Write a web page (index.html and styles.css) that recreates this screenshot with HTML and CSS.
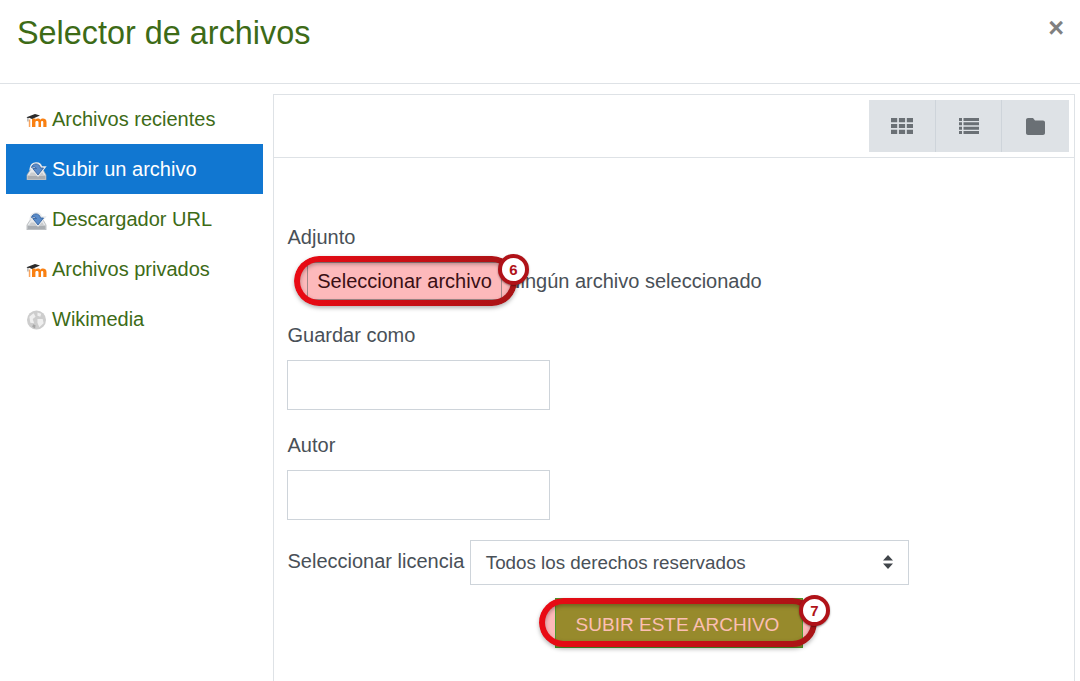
FILE: index.html
```html
<!DOCTYPE html>
<html lang="es">
<head>
<meta charset="utf-8">
<title>Selector de archivos</title>
<link rel="stylesheet" href="styles.css">
</head>
<body>
<svg class="defs" width="0" height="0" aria-hidden="true">
  <defs>
    <symbol id="moodle" viewBox="0 0 21 20">
      <path d="M2.800 9.500H4.300V17H2.800Z" fill="#f9a45c"/>
      <path d="M6 17V8.500H9.400V9.600C10.500 8 13.500 8 14.300 9.700 15.500 8 20.500 7.700 20.500 12V17H17.300V12.300C17.300 10.600 15 10.600 15 12.300V17H12.500V12.300C12.500 10.600 9.400 10.700 9.400 12.300V17Z" fill="#f98012"/>
      <path d="M.5 7.300 9 4 14 5.500 6 9 3 7.800 2.200 8.300V11.500H1.700V7.900Z" fill="#2b2b2b"/>
    </symbol>
    <symbol id="upload" viewBox="0 0 21 20">
      <path d="M5.500 8H16L20 15V20H1V15Z" fill="#e8eaec" stroke="#a8abae" stroke-width=".7"/>
      <path d="M1.500 15.500H19.500V19.500H1.500Z" fill="#a9adb1"/>
      <path d="M5 12.500H16.500L18 15.200H3Z" fill="#c9ccce"/>
      <path d="M5 8C6 2.300 14 2 15 7.500H18L12 15 6.500 8.500H10.500C10 7 7.500 6.500 5 8Z" fill="#e8eaec" stroke="#e8eaec" stroke-width="2.600"/>
      <path d="M5.500 7.500C6.500 2.800 13.500 2.500 14.500 8H17.500L12 15 6.800 8.500H10.500C10 7 7.500 6.500 5.500 7.500Z" fill="#5a8cca" stroke="#2a5a9c" stroke-width=".8"/>
    </symbol>
    <symbol id="globe" viewBox="0 0 21 21">
      <circle cx="10.500" cy="10.500" r="10" fill="#cdcdcd"/>
      <path d="M3 7 7.500 3.500 9.500 7 6.500 9.500 8 14 4 13.500ZM11.500 2.500 15.500 4 14.500 7 11.500 6ZM11.500 9.500 17 9.500 18 14 13.500 18 11.500 13.500Z" fill="#efefef"/>
      <path d="M7 15 9.500 16 9 19.500 6 17.500Z" fill="#a6a6a6"/>
    </symbol>
  </defs>
</svg>

<header class="head">
  <h1 class="title">Selector de archivos</h1>
  <span class="close">×</span>
</header>

<div class="body">
  <nav class="side">
    <a class="item"><svg class="ico"><use href="#moodle"/></svg>Archivos recientes</a>
    <a class="item active"><svg class="ico"><use href="#upload"/></svg>Subir un archivo</a>
    <a class="item"><svg class="ico"><use href="#upload"/></svg>Descargador URL</a>
    <a class="item"><svg class="ico"><use href="#moodle"/></svg>Archivos privados</a>
    <a class="item"><svg class="ico"><use href="#globe"/></svg>Wikimedia</a>
  </nav>

  <main class="panel">
    <div class="toolbar">
      <div class="views">
        <span class="view">
          <svg width="22" height="16" viewBox="0 0 22 16"><path fill="#6a7075" d="M0 0h6.200v4.200H0zM7.900 0h6.200v4.200H7.900zM15.800 0H22v4.200h-6.200zM0 5.900h6.200v4.200H0zM7.900 5.900h6.200v4.200H7.900zM15.800 5.900H22v4.200h-6.200zM0 11.800h6.200V16H0zM7.900 11.800h6.200V16H7.900zM15.800 11.800H22V16h-6.200z"/></svg>
        </span>
        <span class="view">
          <svg width="20" height="16" viewBox="0 0 20 16"><path fill="#6a7075" d="M0 0h3v3H0zM4.500 0H20v3H4.500zM0 4.300h3v3H0zM4.500 4.300H20v3H4.500zM0 8.700h3v3H0zM4.500 8.700H20v3H4.500zM0 13h3v3H0zM4.500 13H20v3H4.500z"/></svg>
        </span>
        <span class="view">
          <svg width="19" height="17" viewBox="0 0 19 17"><path fill="#6a7075" d="M2 0H7L9 2.500H17C18.100 2.500 19 3.400 19 4.500V15C19 16.100 18.100 17 17 17H2C.9 17 0 16.100 0 15V2C0 .9.900 0 2 0Z"/></svg>
        </span>
      </div>
    </div>

    <form class="form">
      <label class="lbl first">Adjunto</label>
      <div class="filerow">
        <span class="hl hl-file"><button type="button" class="filebtn">Seleccionar archivo</button><span class="ring"></span><b class="badge">6</b></span>
        <span class="nofile">Ningún archivo seleccionado</span>
      </div>
      <label class="lbl second">Guardar como</label>
      <input class="txt" type="text">
      <label class="lbl third">Autor</label>
      <input class="txt" type="text">
      <div class="licrow">
        <label class="lbl lic">Seleccionar licencia</label>
        <div class="select">Todos los derechos reservados
          <svg class="caret" width="10" height="14" viewBox="0 0 10 14"><path fill="#40454a" d="M5 0 10 5.500H0ZM5 14 0 8.500H10Z"/></svg>
        </div>
      </div>
      <div class="subrow">
        <span class="hl hl-sub"><button type="button" class="subbtn">SUBIR ESTE ARCHIVO</button><span class="ring"></span><b class="badge">7</b></span>
      </div>
    </form>
  </main>
</div>
</body>
</html>
```

FILE: styles.css
```css
* { box-sizing: border-box; }
html, body { margin: 0; height: 100%; }
body {
  background: #fff;
  overflow: hidden;
  font-family: "Liberation Sans", Arial, sans-serif;
  font-size: 20px;
  color: #495057;
}
.defs { position: absolute; }

.head {
  height: 84px;
  border-bottom: 1px solid #dee2e6;
  display: flex;
  justify-content: space-between;
  align-items: flex-start;
  padding: 0 16px 0 17px;
}
.title {
  margin: 14px 0 0;
  font-size: 32.4px;
  line-height: 38px;
  font-weight: 400;
  color: #3d6b17;
}
.close {
  margin-top: 10px;
  font-size: 27px;
  line-height: 36px;
  font-weight: 700;
  color: #808080;
}

.body {
  display: flex;
  height: 597px;
  overflow: hidden;
  padding: 10px 5px 0 6px;
  gap: 10px;
}
.side { width: 257px; flex: none; }
.item {
  height: 50px;
  display: flex;
  align-items: center;
  gap: 5px;
  padding-left: 20px;
  color: #3d6b17;
}
.item.active { background: #1177d1; color: #fff; }
.ico { width: 21px; height: 20px; flex: none; margin-top: 2px; }

.panel {
  flex: 1;
  border: 1px solid #dee2e6;
  border-bottom: 0;
}
.toolbar {
  height: 63px;
  border-bottom: 1px solid #dee2e6;
  display: flex;
  justify-content: flex-end;
  padding: 5px 5px 0 0;
}
.views { display: flex; height: 52px; }
.view {
  width: 66px;
  background: #dee2e6;
  display: flex;
  align-items: center;
  justify-content: center;
  border-left: 1px solid #ced4da;
}
.view:first-child { border-left: 0; }
.view:last-child { width: 68px; }

.form { padding: 0 13px; display: flex; flex-direction: column; align-items: flex-start; }
.lbl { display: block; line-height: 24px; padding-left: .5px; }
.first { margin-top: 67px; }
.filerow { display: flex; align-items: center; margin-top: 13px; height: 38px; }
.second { margin-top: 23px; }
.third { margin-top: 23px; }
.txt {
  width: 263px;
  height: 50px;
  margin-top: 13px;
  border: 1px solid #ced4da;
  background: #fff;
  display: block;
}

.hl { position: relative; display: inline-block; isolation: isolate; }
.hl::before {
  content: "";
  position: absolute;
  z-index: -1;
  background: #fdb9bb;
  border-radius: 26px;
}
.ring {
  position: absolute;
  filter: drop-shadow(0 2px 2px rgba(0,0,0,.3));
}
.ring::before {
  content: "";
  position: absolute;
  inset: 0;
  border-radius: 26px;
  border: 6px solid transparent;
  background: linear-gradient(90deg, #ea0a14, #a81416) border-box;
  -webkit-mask: linear-gradient(#fff 0 0) padding-box, linear-gradient(#fff 0 0);
  -webkit-mask-composite: xor;
  mask-composite: exclude;
}
.hl-file .ring, .hl-file::before { left: 7px; right: -15px; top: -6px; bottom: -6px; }
.hl-sub .ring, .hl-sub::before { left: -16px; right: -14px; top: 0; bottom: 1px; }

.filebtn {
  display: block;
  width: 195px;
  height: 38px;
  padding: 0;
  margin-left: 20px;
  border: 1px solid #a08888;
  border-radius: 3px;
  background: #fdb9bb;
  color: #3a0f14;
  font: inherit;
}
.nofile { margin-left: 4px; white-space: nowrap; }

.licrow { display: flex; align-items: flex-start; margin-top: 20px; }
.lic { margin-top: 9px; white-space: nowrap; }
.select {
  position: relative;
  width: 439px;
  height: 45px;
  margin-left: 5.5px;
  padding-left: 15px;
  border: 1px solid #ced4da;
  font-size: 18.8px;
  line-height: 43px;
}
.caret { position: absolute; right: 15px; top: 14px; }

.subrow { align-self: stretch; margin-top: 13px; padding-left: 268px; }
.subbtn {
  display: block;
  width: 248px;
  height: 50px;
  padding: 3px 3px 0 0;
  border: 1px solid #4c9a2a;
  background: #978a2c;
  color: #fcbfb4;
  font: inherit;
  font-size: 19px;
}
.badge {
  position: absolute;
  width: 31px;
  height: 31px;
  border-radius: 50%;
  background: #fff;
  border: 4px solid #b01218;
  color: #b01218;
  font-size: 15px;
  line-height: 23px;
  text-align: center;
  box-shadow: 0 1px 2px rgba(0,0,0,.4);
}
.hl-file .badge { right: -27px; top: -8px; }
.hl-sub .badge { right: -27px; top: -3px; }
```
